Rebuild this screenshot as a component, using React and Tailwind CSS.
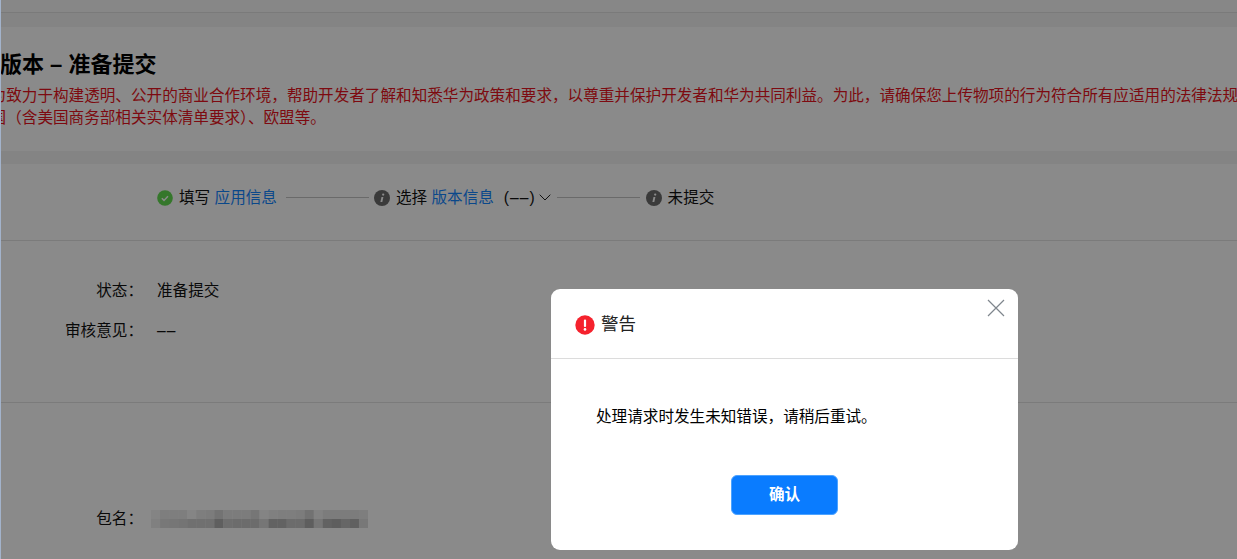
const FONT = 'font-["Liberation_Sans","Noto_Sans_CJK_SC",sans-serif]'

// gray values as they look once the overlay is on top
const MOSAIC = [
  [132, 126, 126, 126, 133, 126, 124, 115, 124, 124, 124, 118, 132, 128, 126, 126, 124, 114, 130, 124, 124, 124, 124, 126],
  [128, 120, 118, 116, 112, 112, 112, 95, 110, 108, 108, 108, 118, 98, 98, 108, 108, 94, 118, 98, 94, 102, 96, 120],
]

function CheckIcon() {
  return (
    <svg width="16" height="16" viewBox="0 0 16 16" className="shrink-0">
      <circle cx="8" cy="8" r="7.8" fill="#62dc50" />
      <path d="M4.8 8.2l2.2 2.2 4-4.2" fill="none" stroke="#fff" strokeWidth="1.5" />
    </svg>
  )
}

function InfoIcon() {
  return (
    <svg width="16" height="16" viewBox="0 0 16 16" className="shrink-0">
      <circle cx="8" cy="8" r="8" fill="#6c6c6c" />
      <path d="M7.5 6.9h1.9l-1.1 5.2h-1.9z" fill="#fff" />
      <circle cx="9.2" cy="4.6" r="1.15" fill="#fff" />
    </svg>
  )
}

function AlertIcon() {
  return (
    <svg width="20" height="20" viewBox="0 0 20 20" className="shrink-0">
      <circle cx="10" cy="10" r="9.7" fill="#f5222d" />
      <rect x="8.9" y="4.6" width="2.2" height="7.4" rx="1" fill="#fff" />
      <circle cx="10" cy="14.4" r="1.3" fill="#fff" />
    </svg>
  )
}

function Connector() {
  return <div className="h-px w-[83px] bg-[#c4c4c4]" />
}

function Row({ label, className, children }) {
  return (
    <div className={`flex items-center ${className}`}>
      <span className="w-[143px] text-right">{label}</span>
      <span className="ml-[14px]">{children}</span>
    </div>
  )
}

function Mosaic() {
  return (
    <svg width="217" height="18" viewBox="0 0 216 18" preserveAspectRatio="none" className="ml-[8px]">
      {MOSAIC.map((row, y) =>
        row.map((v, x) => {
          const c = Math.round(v / 0.54)
          return <rect key={`${x}-${y}`} x={x * 9} y={y * 9} width="9.2" height="9.2" fill={`rgb(${c},${c},${c})`} />
        })
      )}
    </svg>
  )
}

export default function App() {
  return (
    <div className={`relative h-[559px] w-[1237px] overflow-hidden bg-white text-[15.6px] text-[#111] ${FONT}`}>
      {/* page behind the dialog */}
      <div className="h-[13px] border-b border-[#e2e2e2] bg-[#f9f9f9]" />
      <div className="h-[14px] bg-[#f4f4f4]" />

      <div className="h-[124px] overflow-hidden whitespace-nowrap">
        <h1 className="-ml-[44px] mt-[21px] text-[22px] leading-[34px] font-bold text-black">软件版本 – 准备提交</h1>
        <div className="-ml-[25px] mt-[3px] leading-[22px] text-[#e81420]">
          <p>华为致力于构建透明、公开的商业合作环境，帮助开发者了解和知悉华为政策和要求，以尊重并保护开发者和华为共同利益。为此，请确保您上传物项的行为符合所有应适用的法律法规</p>
          <p>美国（含美国商务部相关实体清单要求）、欧盟等。</p>
        </div>
      </div>
      <div className="h-[13px] bg-[#f4f4f4]" />

      <div className="flex h-[77px] items-center gap-[6px] border-b border-[#e3e3e3] pb-[9px] pl-[157px] whitespace-nowrap">
        <CheckIcon />
        <span>填写 <span className="text-[#1486ff]">应用信息</span></span>
        <span className="ml-[3px] -mr-[1px]"><Connector /></span>
        <InfoIcon />
        <span>选择 <span className="text-[#1486ff]">版本信息</span><span className="ml-[10px] tracking-[1px]">(––)</span></span>
        <svg width="12" height="7" viewBox="0 0 12 7" className="-ml-[3px] shrink-0">
          <path d="M.7.7L6 6l5.3-5.3" fill="none" stroke="#222" strokeWidth="1" />
        </svg>
        <Connector />
        <InfoIcon />
        <span>未提交</span>
      </div>

      <div className="h-[162px] border-b border-[#e3e3e3] pt-[38px]">
        <Row label="状态：" className="h-[24px]">准备提交</Row>
        <Row label="审核意见：" className="mt-[16px] h-[24px]"><span className="tracking-[1px]">––</span></Row>
      </div>

      <div className="flex items-center pt-[104px]">
        <span className="w-[143px] text-right">包名：</span>
        <Mosaic />
      </div>

      {/* mask */}
      <div className="absolute inset-0 bg-black/[0.46]" />
      <div className="absolute inset-y-0 left-0 w-px bg-[#a3b3cb]" />

      {/* dialog */}
      <div className="absolute left-[551px] top-[289px] flex h-[261px] w-[467px] flex-col rounded-[9px] bg-white">
        <div className="relative flex h-[70px] items-center gap-[6px] border-b border-[#dcdcdc] pl-[24px] pt-[2px]">
          <AlertIcon />
          <span className="text-[17.5px] text-[#222]">警告</span>
          <svg width="18" height="18" viewBox="0 0 18 18" className="absolute right-[13px] top-[10px]">
            <path d="M1 1l16 16M17 1L1 17" fill="none" stroke="#7f868d" strokeWidth="1.2" />
          </svg>
        </div>
        <p className="mt-[46px] pl-[45px] leading-[24px] text-black">处理请求时发生未知错误，请稍后重试。</p>
        <div className="mt-[46px] flex justify-center">
          <button className="h-[40px] w-[107px] rounded-[6px] border border-[#4da3ff] bg-[#0a7cff] font-bold text-white">确认</button>
        </div>
      </div>
    </div>
  )
}
